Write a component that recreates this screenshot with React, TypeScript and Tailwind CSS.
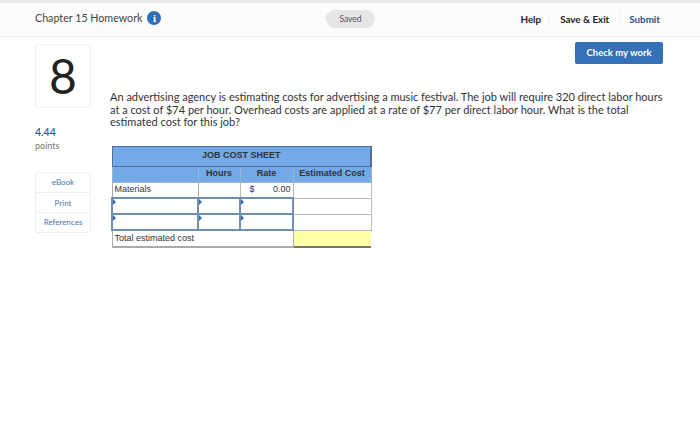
function Marker() {
  return <span className="absolute left-0 top-0 w-0 h-0 border-y-[3px] border-y-transparent border-l-[3px] border-l-[#3a6ea5]" />;
}

function InputCell() {
  return (
    <td className="relative h-[16px] border-2 border-[#6f8fb3] p-0">
      <Marker />
    </td>
  );
}

export default function App() {
  return (
    <div className="w-[700px] h-[446px] bg-white overflow-hidden font-['Lato',sans-serif] text-[#333]">
      {/* Header */}
      <header className="h-[37px] bg-[#fcfcfc] border-t-[3px] border-t-[#e8e8e8] border-b border-b-[#f0f0f0] flex items-center pl-[35px] pr-[40px]">
        <div className="w-[291px] pb-[2px] flex items-center gap-[5px]">
          <span className="text-[10.7px] text-[#444]">Chapter 15 Homework</span>
          <span className="w-[14px] h-[14px] rounded-full bg-[#2f6fb5] flex items-center justify-center text-white text-[11px] font-black leading-none font-['Liberation_Serif',serif]">i</span>
        </div>
        <div className="w-[49px] h-[18px] mb-[1px] rounded-full bg-[#e6e4e7] flex items-center justify-center text-[8.5px] text-[#555]">Saved</div>
        <nav className="ml-auto flex items-center text-[9.8px] font-bold">
          <span className="pr-[8px] text-[#222]">Help</span>
          <span className="px-[10px] border-l border-r border-[#f2f2f2] text-[#222]">Save &amp; Exit</span>
          <span className="pl-[9px] text-[#1f4f86]">Submit</span>
        </nav>
      </header>

      <main className="flex pl-[35px] pr-[37px] pt-[5px]">
        {/* Left column */}
        <aside className="w-[56px] shrink-0 mt-[2px]">
          <div className="h-[64px] border border-[#f2f2f2] rounded-[3px] flex items-center justify-center text-[48px] leading-none text-[#222]">8</div>
          <div className="mt-[18px] text-[10.5px] font-medium text-[#1f4f86] leading-[13px]">4.44</div>
          <div className="text-[9px] text-[#777] leading-[13px]">points</div>
          <div className="mt-[20px] border border-[#efefef] rounded-[3px] text-[8px] text-[#4b76a8] text-center">
            <div className="h-[20px] pb-[2px] flex items-center justify-center border-b border-[#efefef]">eBook</div>
            <div className="h-[20px] flex items-center justify-center border-b border-[#efefef]">Print</div>
            <div className="h-[19px] pb-[1px] flex items-center justify-center">References</div>
          </div>
        </aside>

        {/* Question */}
        <section className="flex-1 ml-[19px]">
          <div className="flex justify-end">
            <button className="w-[88px] h-[22px] bg-[#3370b4] rounded-[2px] text-white text-[9.5px] font-bold">Check my work</button>
          </div>
          <p className="mt-[27px] text-[11px] leading-[12.5px] text-[#333]">
            An advertising agency is estimating costs for advertising a music festival. The job will require 320 direct labor hours at a cost of $74 per hour. Overhead costs are applied at a rate of $77 per direct labor hour. What is the total estimated cost for this job?
          </p>

          <table className="mt-[17px] ml-[1px] w-[259px] table-fixed border-collapse font-['Liberation_Sans',sans-serif] text-[9px] text-[#333]">
            <colgroup>
              <col className="w-[86px]" />
              <col className="w-[42px]" />
              <col className="w-[53px]" />
              <col className="w-[78px]" />
            </colgroup>
            <tbody>
              <tr className="h-[20px] bg-[#72a9e6] font-bold">
                <td colSpan={4} className="border border-[#55708f] border-r-2 text-center p-0">JOB COST SHEET</td>
              </tr>
              <tr className="h-[16px] bg-[#72a9e6] font-bold text-center">
                <td className="border border-[#9fb4cc] p-0"></td>
                <td className="border border-[#9fb4cc] p-0">Hours</td>
                <td className="border border-[#9fb4cc] p-0">Rate</td>
                <td className="border border-[#9fb4cc] p-0">Estimated Cost</td>
              </tr>
              <tr className="h-[16px]">
                <td className="border border-[#aaa] px-[2px] py-0">Materials</td>
                <td className="border border-[#bbb] p-0"></td>
                <td className="border border-[#bbb] px-[2px] py-0">
                  <div className="flex justify-between pl-[7px]"><span>$</span><span>0.00</span></div>
                </td>
                <td className="border border-[#bbb] p-0"></td>
              </tr>
              <tr className="h-[16px]">
                <InputCell />
                <InputCell />
                <InputCell />
                <td className="border border-[#bbb] p-0"></td>
              </tr>
              <tr className="h-[16px]">
                <InputCell />
                <InputCell />
                <InputCell />
                <td className="border border-[#bbb] p-0"></td>
              </tr>
              <tr className="h-[17px]">
                <td colSpan={3} className="border border-[#aaa] border-b-2 px-[2px] py-0">Total estimated cost</td>
                <td className="bg-[#ffffa8] border-t border-t-[#8a8a50] border-b-2 border-b-[#777] p-0"></td>
              </tr>
            </tbody>
          </table>
        </section>
      </main>
    </div>
  );
}
